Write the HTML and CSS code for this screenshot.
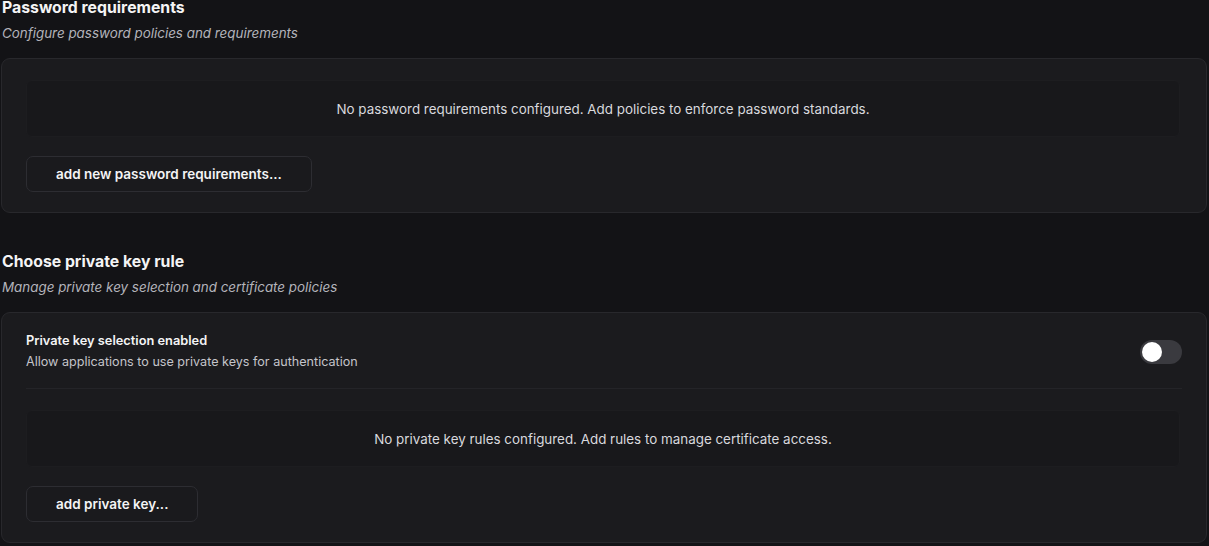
FILE: index.html
```html
<!DOCTYPE html>
<html lang="en">
<head>
<meta charset="utf-8">
<title>Security settings</title>
<link rel="stylesheet" href="styles.css">
</head>
<body>
<main class="page">
  <section class="section">
    <header class="section-head">
      <h2 class="section-title">Password requirements</h2>
      <p class="section-sub">Configure password policies and requirements</p>
    </header>
    <div class="card">
      <div class="empty">No password requirements configured. Add policies to enforce password standards.</div>
      <div class="actions">
        <button class="btn" type="button">add new password requirements...</button>
      </div>
    </div>
  </section>

  <section class="section">
    <header class="section-head">
      <h2 class="section-title">Choose private key rule</h2>
      <p class="section-sub">Manage private key selection and certificate policies</p>
    </header>
    <div class="card">
      <div class="setting">
        <div class="setting-text">
          <div class="setting-label">Private key selection enabled</div>
          <div class="setting-desc">Allow applications to use private keys for authentication</div>
        </div>
        <span class="toggle" role="switch" aria-checked="false"><span class="knob"></span></span>
      </div>
      <div class="divider"></div>
      <div class="empty">No private key rules configured. Add rules to manage certificate access.</div>
      <div class="actions">
        <button class="btn" type="button">add private key...</button>
      </div>
    </div>
  </section>
</main>
</body>
</html>
```

FILE: styles.css
```css
* { box-sizing: border-box; }
html, body {
  margin: 0;
  padding: 0;
  background: #131316;
}
body {
  font-family: Inter, "Noto Sans", sans-serif;
  color: #f4f4f5;
}
.page {
  display: flex;
  flex-direction: column;
  gap: 41px;
  padding: 0 2px 0 1px;
}
.section {
  display: flex;
  flex-direction: column;
  gap: 16px;
}
.section-head {
  display: flex;
  flex-direction: column;
  gap: 8px;
  padding-left: 1px;
}
.section-title {
  margin: 0;
  font-size: 15.8px;
  line-height: 16px;
  font-weight: 650;
  color: #f4f4f5;
}
.section-sub {
  margin: 0;
  font-size: 13.4px;
  line-height: 18px;
  font-style: italic;
  color: #b4b4bb;
}
.card {
  background: #1b1b1e;
  border: 1px solid #28282c;
  border-radius: 9px;
  padding: 21px 24px 20px 24px;
  display: flex;
  flex-direction: column;
}
.empty {
  background: #18181b;
  border: 1px solid #1d1d20;
  border-radius: 6px;
  height: 57px;
  display: flex;
  align-items: center;
  justify-content: center;
  font-size: 13.4px;
  color: #d9d9de;
  margin-right: 2px;
}
.actions {
  margin-top: 19px;
  display: flex;
}
.btn {
  font-family: Inter, "Noto Sans", sans-serif;
  font-size: 13.5px;
  font-weight: 600;
  color: #f4f4f5;
  background: #1a1a1d;
  border: 1px solid #2d2d32;
  border-radius: 7px;
  height: 36px;
  padding: 0 29px;
  cursor: pointer;
}
.setting {
  display: flex;
  align-items: center;
  justify-content: space-between;
  margin-top: -1px;
}
.setting-text {
  display: flex;
  flex-direction: column;
  gap: 5px;
}
.setting-label {
  font-size: 12.8px;
  line-height: 16px;
  font-weight: 600;
  color: #f4f4f5;
}
.setting-desc {
  font-size: 12.6px;
  line-height: 16px;
  color: #c4c4ca;
}
.toggle {
  width: 42px;
  height: 24px;
  border-radius: 12px;
  background: #3a3a3f;
  display: flex;
  align-items: center;
  padding: 0 2px;
}
.knob {
  width: 20px;
  height: 20px;
  border-radius: 50%;
  background: #ffffff;
}
.divider {
  height: 1px;
  background: #242428;
  margin: 18px 0 21px 0;
}
```
